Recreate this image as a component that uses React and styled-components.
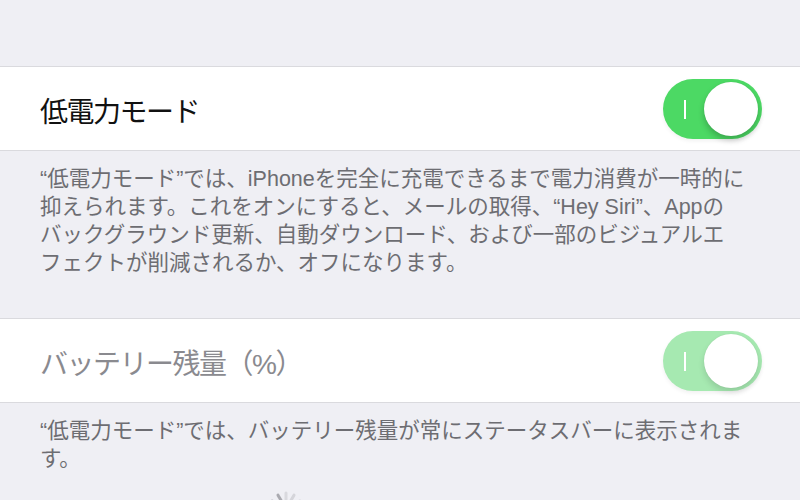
import React from "react";
import styled, { createGlobalStyle } from "styled-components";

const GlobalStyle = createGlobalStyle`
  html, body {
    margin: 0;
    padding: 0;
    overflow: hidden;
    background: #efeff4;
  }
  body {
    font-family: "Liberation Sans", "Noto Sans CJK JP", sans-serif;
  }
`;

const Page = styled.div`
  width: 800px;
  min-height: 560px;
  background: #efeff4;
  padding-top: 66px;
`;

const Group = styled.div`
  margin-top: ${props => props.gap || 0}px;
`;

const Cell = styled.div`
  height: 83px;
  background: #ffffff;
  border-top: 1px solid #dadade;
  border-bottom: 1px solid #dadade;
  display: flex;
  align-items: center;
  justify-content: space-between;
  padding: 0 38px 0 40px;
`;

const Label = styled.span`
  font-size: 28px;
  letter-spacing: -1.5px;
  color: ${props => (props.dim ? "#8a8a8f" : "#111111")};
  margin-top: 2px;
`;

const Track = styled.div`
  position: relative;
  width: 99px;
  height: 60px;
  border-radius: 30px;
  background: ${props => (props.dim ? "#a6e9b1" : "#4cd964")};
  box-shadow: 0 2px 4px rgba(0, 0, 0, 0.06);
`;

const OnMark = styled.span`
  position: absolute;
  left: 21px;
  top: 21px;
  width: 2px;
  height: 19px;
  background: #ffffff;
`;

const Knob = styled.span`
  position: absolute;
  right: 4px;
  top: 3px;
  width: 54px;
  height: 54px;
  border-radius: 50%;
  background: #ffffff;
  box-shadow: 0 4px 6px rgba(0, 0, 0, ${props => (props.dim ? 0.12 : 0.22)}),
    0 0 1px rgba(0, 0, 0, 0.1);
`;

const Footer = styled.div`
  padding: 14px 0 0 40px;
  font-size: 21.5px;
  line-height: 28px;
  color: #6d6d72;
`;

const Line = styled.div`
  white-space: nowrap;
`;

const SpinnerRow = styled.div`
  display: flex;
  padding: 18px 0 0 268px;
`;

const Toggle = ({ dim }) => (
  <Track dim={dim}>
    <OnMark />
    <Knob dim={dim} />
  </Track>
);

const Spinner = () => (
  <svg width="36" height="36" viewBox="-18 -18 36 36">
    {Array.from({ length: 12 }).map((_, i) => (
      <line
        key={i}
        x1="0"
        y1="-8"
        x2="0"
        y2="-16"
        stroke="#9a9aa0"
        strokeWidth="3"
        strokeLinecap="round"
        opacity={0.25 + i * 0.05}
        transform={`rotate(${i * 30})`}
      />
    ))}
  </svg>
);

const grupos = [
  {
    label: "低電力モード",
    dim: false,
    gap: 0,
    lines: [
      "“低電力モード”では、iPhoneを完全に充電できるまで電力消費が一時的に",
      "抑えられます。これをオンにすると、メールの取得、“Hey Siri”、Appの",
      "バックグラウンド更新、自動ダウンロード、および一部のビジュアルエ",
      "フェクトが削減されるか、オフになります。"
    ]
  },
  {
    label: "バッテリー残量（%）",
    dim: true,
    gap: 41,
    lines: ["“低電力モード”では、バッテリー残量が常にステータスバーに表示されま", "す。"]
  }
];

export default function App() {
  return (
    <Page>
      <GlobalStyle />
      {grupos.map(grupo => (
        <Group key={grupo.label} gap={grupo.gap}>
          <Cell>
            <Label dim={grupo.dim}>{grupo.label}</Label>
            <Toggle dim={grupo.dim} />
          </Cell>
          <Footer>
            {grupo.lines.map(linha => (
              <Line key={linha}>{linha}</Line>
            ))}
          </Footer>
        </Group>
      ))}
      <SpinnerRow>
        <Spinner />
      </SpinnerRow>
    </Page>
  );
}
